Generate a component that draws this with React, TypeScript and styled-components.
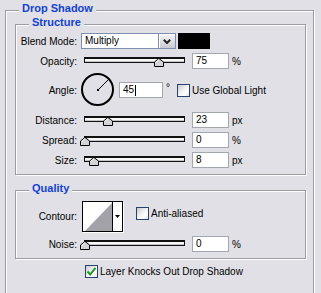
import React from 'react';
import styled, { createGlobalStyle } from 'styled-components';

const BG = '#e0e0e6';

const Global = createGlobalStyle`
  html, body { margin: 0; padding: 0; overflow: hidden; background: ${BG}; }
  body { font-family: "Liberation Sans", Arial, sans-serif; font-size: 10px; color: #000; }
  * { box-sizing: border-box; }
`;

const Page = styled.div`
  width: 321px;
  height: 293px;
  overflow: hidden;
  padding: 10px 0 0 5px;
`;

const Group = styled.section<{ $outer?: boolean; $mt?: number }>`
  display: flex;
  flex-direction: column;
  border: 1px solid #9c9ca4;
  box-shadow: inset 1px 1px 0 #fff, 1px 1px 0 #fff;
  width: ${p => (p.$outer ? '309px' : '291px')};
  ${p => (p.$outer ? 'height: 300px; padding: 0 7px 0 9px;' : 'padding: 0 0 6px 0;')}
  margin-top: ${p => p.$mt ?? 0}px;
`;

const Legend = styled.h2<{ $indent: number }>`
  align-self: flex-start;
  margin: -9px 0 0 ${p => p.$indent}px;
  padding: 0 3px;
  background: ${BG};
  font: bold 11px/13px "Liberation Sans", Arial, sans-serif;
  color: #1442d0;
`;

const Row = styled.div<{ $h: number; $mt: number; $indent?: number }>`
  display: flex;
  align-items: center;
  height: ${p => p.$h}px;
  margin-top: ${p => p.$mt}px;
  margin-left: ${p => p.$indent ?? 0}px;
`;

const Label = styled.span`
  width: 61px;
  flex-shrink: 0;
  text-align: right;
  margin-right: 4px;
  white-space: nowrap;
`;

const Select = styled.div`
  display: flex;
  width: 95px;
  height: 16px;
  border: 1px solid #7d8fae;
  background: #fff;
`;

const SelectText = styled.span`
  flex: 1;
  padding-left: 3px;
  line-height: 14px;
`;

const SelectButton = styled.span`
  width: 17px;
  display: flex;
  align-items: center;
  justify-content: center;
  border-left: 1px solid #7d8fae;
  background: linear-gradient(#f6f6f8, #c9cad2);
  box-shadow: inset 1px 1px 0 #fff;
`;

const Swatch = styled.span`
  width: 32px;
  height: 16px;
  margin-left: 2px;
  background: #000;
`;

const Slider = styled.div`
  position: relative;
  width: 106px;
  height: 16px;
  padding: 4px 0 0 3px;
  flex-shrink: 0;
`;

const Track = styled.div`
  width: 101px;
  height: 6px;
  border: 1px solid #111;
  border-top-width: 2px;
  background: #f7f7f7;
  box-shadow: inset 0 -1px 0 #c4c4c8;
`;

const Thumb = styled.svg`
  position: absolute;
  top: 5px;
  width: 10px;
  height: 9px;
`;

const Field = styled.div<{ $w: number; $ml: number }>`
  width: ${p => p.$w}px;
  height: 16px;
  margin-left: ${p => p.$ml}px;
  border: 1px solid #a3a7b0;
  background: #fff;
  padding-left: 3px;
  line-height: 14px;
  display: flex;
  align-items: center;
`;

const Caret = styled.span`
  width: 1px;
  height: 11px;
  background: #000;
  margin-left: 1px;
`;

const Unit = styled.span`
  margin-left: 3px;
`;

const Degree = styled.span`
  align-self: flex-start;
  margin-top: 10px;
  width: 14px;
  padding-left: 3px;
  line-height: 10px;
`;

const CheckRow = styled.label<{ $mt?: number }>`
  display: flex;
  align-items: center;
  gap: 2px;
  align-self: ${p => (p.$mt !== undefined ? 'flex-start' : 'center')};
  margin-top: ${p => p.$mt ?? 0}px;
`;

const CheckBox = styled.span`
  width: 13px;
  height: 13px;
  border: 1px solid #27426e;
  background: linear-gradient(135deg, #c9c9cf 0%, #f4f4f4 50%, #ffffff 70%, #e4e4e8 100%);
  display: flex;
  align-items: center;
  justify-content: center;
`;

const Contour = styled.div`
  display: flex;
  width: 41px;
  height: 31px;
  margin-left: 1px;
  border: 1px solid #000;
  background: #fff;
  box-shadow: 1px 1px 0 #fff;
`;

const ContourArrow = styled.span`
  flex: 1;
  border-left: 1px solid #000;
  display: flex;
  align-items: center;
  justify-content: center;
`;

const Gap = styled.span<{ $w: number }>`
  width: ${p => p.$w}px;
  flex-shrink: 0;
`;

function SliderCtl({ pos }: { pos: number }) {
  return (
    <Slider>
      <Track />
      <Thumb style={{ left: pos - 1 }} viewBox="0 0 10 9">
        <polygon points="0.5,4 5,0.5 9.5,4 9.5,8.5 0.5,8.5" fill="#d4d4d8" stroke="#000" strokeWidth="1" />
        <line x1="1.5" y1="4.5" x2="5" y2="1.5" stroke="#fff" strokeWidth="1" />
      </Thumb>
    </Slider>
  );
}

function Check({ checked, text, mt }: { checked?: boolean; text: string; mt?: number }) {
  return (
    <CheckRow $mt={mt}>
      <CheckBox>
        {checked && (
          <svg width="11" height="11" viewBox="0 0 11 11">
            <polyline points="1.5,5.5 4.2,8.5 9.5,1.8" fill="none" stroke="#1f9a1f" strokeWidth="2" />
          </svg>
        )}
      </CheckBox>
      <span>{text}</span>
    </CheckRow>
  );
}

function SliderRow({ label, pos, value, unit, mt }: { label: string; pos: number; value: string; unit: string; mt: number }) {
  return (
    <Row $h={16} $mt={mt}>
      <Label>{label}</Label>
      <SliderCtl pos={pos} />
      <Field $w={37} $ml={5}>{value}</Field>
      <Unit>{unit}</Unit>
    </Row>
  );
}

export default function App() {
  return (
    <>
      <Global />
      <Page>
        <Group $outer>
          <Legend $indent={4}>Drop Shadow</Legend>
          <Group $mt={9}>
            <Legend $indent={13}>Structure</Legend>
            <Row $h={16} $mt={4}>
              <Label>Blend Mode:</Label>
              <Select>
                <SelectText>Multiply</SelectText>
                <SelectButton>
                  <svg width="8" height="5" viewBox="0 0 8 5">
                    <polyline points="0.8,0.8 4,4 7.2,0.8" fill="none" stroke="#222" strokeWidth="2" />
                  </svg>
                </SelectButton>
              </Select>
              <Swatch />
            </Row>
            <SliderRow label="Opacity:" pos={74} value="75" unit="%" mt={4} />
            <Row $h={34} $mt={4}>
              <Label>Angle:</Label>
              <svg width="34" height="34" viewBox="0 0 34 34">
                <circle cx="16.5" cy="16.5" r="15.5" fill="none" stroke="#000" strokeWidth="2" />
                <line x1="17" y1="17" x2="27" y2="7" stroke="#000" strokeWidth="1" />
                <rect x="16" y="16" width="2" height="2" fill="#000" />
              </svg>
              <Field $w={44} $ml={4}>
                45<Caret />
              </Field>
              <Degree>°</Degree>
              <Check text="Use Global Light" />
            </Row>
            <SliderRow label="Distance:" pos={23} value="23" unit="px" mt={5} />
            <SliderRow label="Spread:" pos={0} value="0" unit="%" mt={4} />
            <SliderRow label="Size:" pos={9} value="8" unit="px" mt={4} />
          </Group>
          <Group $mt={15}>
            <Legend $indent={13}>Quality</Legend>
            <Row $h={31} $mt={6}>
              <Label>Contour:</Label>
              <Contour>
                <svg width="29" height="29" viewBox="0 0 29 29">
                  <polygon points="2,29 29,1 29,29" fill="#a2a2a8" />
                </svg>
                <ContourArrow>
                  <svg width="5" height="3" viewBox="0 0 5 3">
                    <polygon points="0,0 5,0 2.5,3" fill="#000" />
                  </svg>
                </ContourArrow>
              </Contour>
              <Gap $w={13} />
              <Check text="Anti-aliased" mt={6} />
            </Row>
            <SliderRow label="Noise:" pos={0} value="0" unit="%" mt={4} />
          </Group>
          <Row $h={14} $mt={5} $indent={70}>
            <Check checked text="Layer Knocks Out Drop Shadow" />
          </Row>
        </Group>
      </Page>
    </>
  );
}
